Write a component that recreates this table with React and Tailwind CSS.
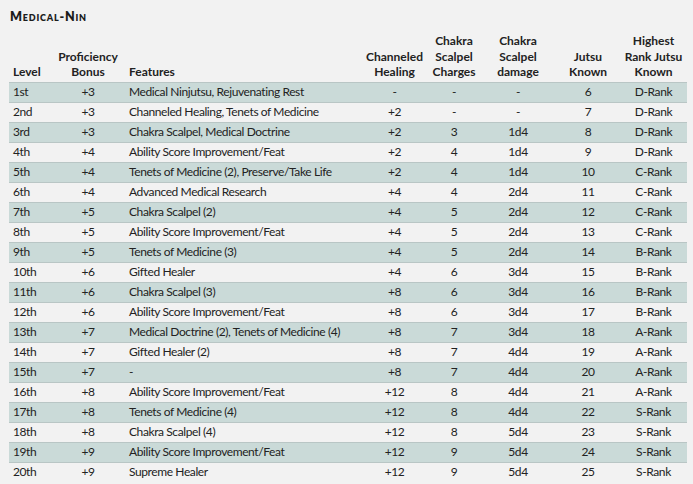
import React from "react";

const rows = [
  ["1st", "+3", "Medical Ninjutsu, Rejuvenating Rest", "-", "-", "-", "6", "D-Rank"],
  ["2nd", "+3", "Channeled Healing, Tenets of Medicine", "+2", "-", "-", "7", "D-Rank"],
  ["3rd", "+3", "Chakra Scalpel, Medical Doctrine", "+2", "3", "1d4", "8", "D-Rank"],
  ["4th", "+4", "Ability Score Improvement/Feat", "+2", "4", "1d4", "9", "D-Rank"],
  ["5th", "+4", "Tenets of Medicine (2), Preserve/Take Life", "+2", "4", "1d4", "10", "C-Rank"],
  ["6th", "+4", "Advanced Medical Research", "+4", "4", "2d4", "11", "C-Rank"],
  ["7th", "+5", "Chakra Scalpel (2)", "+4", "5", "2d4", "12", "C-Rank"],
  ["8th", "+5", "Ability Score Improvement/Feat", "+4", "5", "2d4", "13", "C-Rank"],
  ["9th", "+5", "Tenets of Medicine (3)", "+4", "5", "2d4", "14", "B-Rank"],
  ["10th", "+6", "Gifted Healer", "+4", "6", "3d4", "15", "B-Rank"],
  ["11th", "+6", "Chakra Scalpel (3)", "+8", "6", "3d4", "16", "B-Rank"],
  ["12th", "+6", "Ability Score Improvement/Feat", "+8", "6", "3d4", "17", "B-Rank"],
  ["13th", "+7", "Medical Doctrine (2), Tenets of Medicine (4)", "+8", "7", "3d4", "18", "A-Rank"],
  ["14th", "+7", "Gifted Healer (2)", "+8", "7", "4d4", "19", "A-Rank"],
  ["15th", "+7", "-", "+8", "7", "4d4", "20", "A-Rank"],
  ["16th", "+8", "Ability Score Improvement/Feat", "+12", "8", "4d4", "21", "A-Rank"],
  ["17th", "+8", "Tenets of Medicine (4)", "+12", "8", "4d4", "22", "S-Rank"],
  ["18th", "+8", "Chakra Scalpel (4)", "+12", "8", "5d4", "23", "S-Rank"],
  ["19th", "+9", "Ability Score Improvement/Feat", "+12", "9", "5d4", "24", "S-Rank"],
  ["20th", "+9", "Supreme Healer", "+12", "9", "5d4", "25", "S-Rank"],
];

export default function App() {
  return (
    <div
      className="w-[693px] h-[484px] bg-[#f2f2f2] text-[#222] overflow-hidden pl-[9px] pr-[6px]"
      style={{ fontFamily: "Lato, 'Liberation Sans', sans-serif" }}
    >
      <div className="pt-[8px] pl-[1px] h-[29px] text-[12.5px] font-extrabold leading-[17px] [font-variant:small-caps] tracking-[0.8px] text-[#1c1c1c]">
        Medical-Nin
      </div>
      <table className="table-fixed border-collapse w-[678px] text-[12px]">
        <colgroup>
          <col className="w-[41px]" />
          <col className="w-[76px]" />
          <col className="w-[235px]" />
          <col className="w-[67px]" />
          <col className="w-[52px]" />
          <col className="w-[76px]" />
          <col className="w-[64px]" />
          <col className="w-[67px]" />
        </colgroup>
        <thead>
          <tr className="h-[53px] align-bottom font-bold leading-[15.5px]">
            <th className="text-left pl-[4px] pb-[2px] font-bold">Level</th>
            <th className="text-center pb-[2px] font-bold">Proficiency<br />Bonus</th>
            <th className="text-left pl-[3px] pb-[2px] font-bold">Features</th>
            <th className="text-center pb-[2px] font-bold">Channeled<br />Healing</th>
            <th className="text-center pb-[2px] font-bold">Chakra<br />Scalpel<br />Charges</th>
            <th className="text-center pb-[2px] font-bold">Chakra<br />Scalpel<br />damage</th>
            <th className="text-center pb-[2px] font-bold">Jutsu<br />Known</th>
            <th className="text-center pb-[2px] font-bold">Highest<br />Rank Jutsu<br />Known</th>
          </tr>
        </thead>
        <tbody className="tracking-[-0.4px]">
          {rows.map((r, i) => (
            <tr
              key={r[0]}
              className={
                i % 2 === 0
                  ? "h-[20px] bg-[#cadad8] border-y border-[#b9c6c5]"
                  : "h-[20px] bg-[#f2f2f2]"
              }
            >
              <td className="pl-[4px] leading-[18px]">{r[0]}</td>
              <td className="text-center leading-[18px]">{r[1]}</td>
              <td className="pl-[3px] leading-[18px] whitespace-nowrap">{r[2]}</td>
              <td className="text-center leading-[18px]">{r[3]}</td>
              <td className="text-center leading-[18px]">{r[4]}</td>
              <td className="text-center leading-[18px]">{r[5]}</td>
              <td className="text-center leading-[18px]">{r[6]}</td>
              <td className="text-center leading-[18px]">{r[7]}</td>
            </tr>
          ))}
        </tbody>
      </table>
    </div>
  );
}
